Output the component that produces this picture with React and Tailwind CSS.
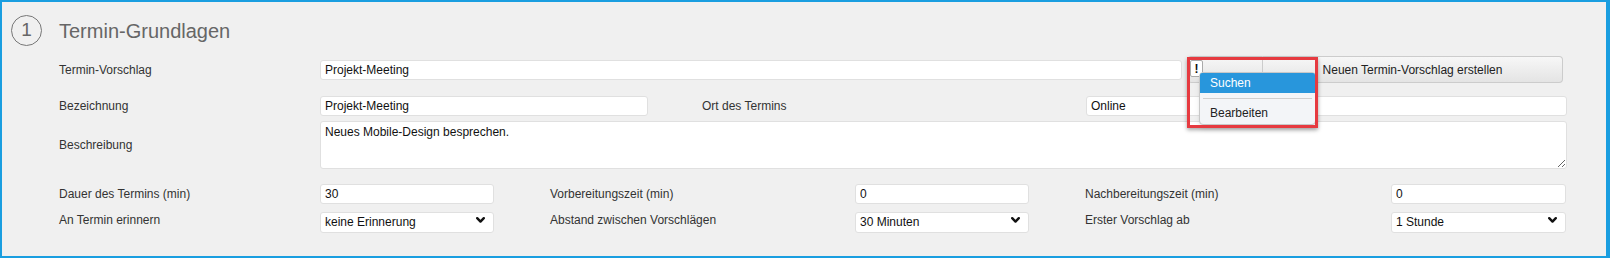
import React from 'react';

const font = { fontFamily: '"Liberation Sans", Arial, sans-serif' };

function Chevron() {
  return (
    <svg width="9" height="6" viewBox="0 0 9 6" className="absolute right-[9px] top-1/2 -translate-y-1/2 pointer-events-none">
      <path d="M1.2 1.2 L4.5 4.6 L7.8 1.2" fill="none" stroke="#111" strokeWidth="2.4" strokeLinecap="round" strokeLinejoin="round" />
    </svg>
  );
}

function TextInput({ value, className = '' }) {
  return (
    <input
      defaultValue={value}
      className={`h-[20px] bg-white border border-[#e0e0e0] rounded-[3px] px-[4px] text-[12px] text-[#111] outline-none ${className}`}
    />
  );
}

function Select({ value, options, className = '' }) {
  return (
    <div className={`relative h-[21px] ${className}`}>
      <select
        defaultValue={value}
        className="appearance-none w-full h-full bg-white border border-[#e0e0e0] rounded-[3px] pl-[4px] pr-[20px] text-[12px] text-[#111] outline-none"
      >
        {options.map((o) => (
          <option key={o}>{o}</option>
        ))}
      </select>
      <Chevron />
    </div>
  );
}

function Label({ children, className = '' }) {
  return <div className={`text-[12px] text-[#333] shrink-0 ${className}`}>{children}</div>;
}

export default function App() {
  return (
    <div style={font} className="w-[1610px] h-[258px] bg-[#f0f0f0] border-t-2 border-l-2 border-b-2 border-r-[4px] border-[#1a9ee0] overflow-hidden">
      <div className="pl-[9px] pt-[13px] flex items-center h-[44px]">
        <div className="w-[31px] h-[31px] rounded-full border border-[#777] flex items-center justify-center text-[19px] text-[#666]">1</div>
        <div className="ml-[17px] text-[20px] text-[#666]">Termin-Grundlagen</div>
      </div>

      <div className="pl-[57px]">
        {/* Termin-Vorschlag */}
        <div className="flex items-center mt-[10px] h-[27px]">
          <Label className="w-[261px]">Termin-Vorschlag</Label>
          <TextInput value="Projekt-Meeting" className="w-[862px]" />
          <div className="relative ml-[5px] flex h-[27px]">
            <div className="w-[76px] h-full border border-[#ccc] rounded-l-[4px] bg-gradient-to-b from-[#f7f7f7] to-[#e4e4e4]"></div>
            <button className="w-[300px] h-full border border-l-0 border-[#ccc] rounded-r-[4px] bg-gradient-to-b from-[#f7f7f7] to-[#e4e4e4] text-[12px] text-[#222]">
              Neuen Termin-Vorschlag erstellen
            </button>

            <div className="absolute left-[3px] top-[4px] w-[13px] h-[17px] bg-white border border-[#aaa] rounded-[2px] flex items-center justify-center text-[12px] font-bold text-[#111] leading-none">!</div>

            <div className="absolute left-[12px] top-[16px] w-[117px] h-[53px] bg-[#f3f5f8] border border-[#c8c8c8] rounded-[4px] shadow-md text-[12px]">
              <div className="h-[20px] leading-[20px] bg-[#2896dc] text-white pl-[10px] rounded-t-[2px]">Suchen</div>
              <div className="mx-[3px] mt-[5px] h-px bg-[#cfcfcf]"></div>
              <div className="h-[21px] leading-[21px] mt-[4px] pl-[10px] text-[#222]">Bearbeiten</div>
            </div>

            <div className="absolute left-0 top-[1px] w-[131px] h-[71px] border-[3px] border-[#e63a40] shadow-[0_2px_4px_rgba(0,0,0,0.35)]"></div>
          </div>
        </div>

        {/* Bezeichnung / Ort */}
        <div className="flex items-center mt-[13px] h-[20px]">
          <Label className="w-[261px]">Bezeichnung</Label>
          <TextInput value="Projekt-Meeting" className="w-[328px]" />
          <Label className="ml-[54px] w-[384px]">Ort des Termins</Label>
          <TextInput value="Online" className="w-[481px]" />
        </div>

        {/* Beschreibung */}
        <div className="flex items-center mt-[5px] h-[48px]">
          <Label className="w-[261px]">Beschreibung</Label>
          <textarea
            defaultValue="Neues Mobile-Design besprechen."
            className="w-[1247px] h-[48px] bg-white border border-[#e0e0e0] rounded-[3px] px-[4px] pt-[3px] text-[12px] text-[#111] outline-none leading-[14px]"
          />
        </div>

        {/* Dauer */}
        <div className="flex items-center mt-[15px] h-[20px]">
          <Label className="w-[261px]">Dauer des Termins (min)</Label>
          <TextInput value="30" className="w-[174px]" />
          <Label className="ml-[56px] w-[305px]">Vorbereitungszeit (min)</Label>
          <TextInput value="0" className="w-[174px]" />
          <Label className="ml-[56px] w-[306px]">Nachbereitungszeit (min)</Label>
          <TextInput value="0" className="w-[175px]" />
        </div>

        {/* Selects */}
        <div className="flex items-center mt-[5px] h-[21px]">
          <Label className="w-[261px]">An Termin erinnern</Label>
          <Select value="keine Erinnerung" options={['keine Erinnerung', '15 Minuten', '1 Stunde']} className="w-[174px]" />
          <Label className="ml-[56px] w-[305px]">Abstand zwischen Vorschlägen</Label>
          <Select value="30 Minuten" options={['15 Minuten', '30 Minuten', '60 Minuten']} className="w-[174px]" />
          <Label className="ml-[56px] w-[306px]">Erster Vorschlag ab</Label>
          <Select value="1 Stunde" options={['30 Minuten', '1 Stunde', '2 Stunden']} className="w-[175px]" />
        </div>
      </div>
    </div>
  );
}
